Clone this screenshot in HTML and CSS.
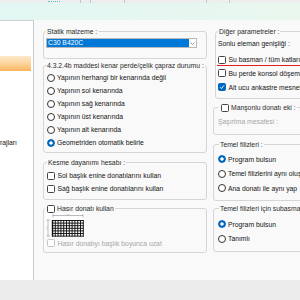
FILE: index.html
```html
<!DOCTYPE html>
<html lang="tr">
<head>
<meta charset="utf-8">
<title>Perde parametreleri</title>
<link rel="stylesheet" href="styles.css">
</head>
<body>
<div class="topstrip">
  <div class="cell w1"><span class="teal"></span></div>
  <div class="cell w2"></div>
  <div class="cell w3"></div>
  <div class="cell w4"></div>
  <div class="cell w5"></div>
  <div class="cell w6"></div>
</div>
<div class="band"></div>
<div class="main">
  <div class="tree">
    <div class="tree-sel"></div>
    <div class="tree-item">rajları</div>
  </div>

  <div class="col col-left">
    <fieldset class="grp g1">
      <legend>Statik malzeme :</legend>
      <div class="select">
        <span class="sel-val">C30 B420C</span>
        <span class="sel-arrow"><svg width="5" height="3" viewBox="0 0 5 3"><polyline points="0.5,0.5 2.5,2.5 4.5,0.5" fill="none" stroke="#666" stroke-width="0.7"/></svg></span>
      </div>
    </fieldset>

    <fieldset class="grp g2">
      <legend class="flush">4.3.2.4b maddesi kenar perde/çelik çapraz durumu :</legend>
      <div class="opt"><span class="radio"></span><span>Yapının herhangi bir kenarında değil</span></div>
      <div class="opt"><span class="radio"></span><span>Yapının sol kenarında</span></div>
      <div class="opt"><span class="radio"></span><span>Yapının sağ kenarında</span></div>
      <div class="opt"><span class="radio"></span><span>Yapının üst kenarında</span></div>
      <div class="opt"><span class="radio"></span><span>Yapının alt kenarında</span></div>
      <div class="opt"><span class="radio on"></span><span>Geometriden otomatik belirle</span></div>
    </fieldset>

    <fieldset class="grp g3">
      <legend>Kesme dayanımı hesabı :</legend>
      <div class="opt ck"><span class="chk"></span><span>Sol başlık enine donatılarını kullan</span></div>
      <div class="opt ck"><span class="chk"></span><span>Sağ başlık enine donatılarını kullan</span></div>
    </fieldset>

    <fieldset class="grp g4">
      <legend class="lg-cb"><span class="chk"></span><span>Hasır donatı kullan</span></legend>
      <svg class="mesh" width="40" height="24" viewBox="0 0 40 24">
        <rect x="0" y="0" width="40" height="24" fill="#fff"/>
        <g stroke="#777" stroke-width="0.5">
          <line x1="8" y1="2.5" x2="38" y2="2.5"/>
          <line x1="8" y1="1" x2="8" y2="4.5"/>
          <line x1="38" y1="1" x2="38" y2="4.5"/>
          <line x1="3" y1="7" x2="3" y2="23"/>
          <line x1="1.5" y1="7" x2="5" y2="7"/>
          <line x1="1.5" y1="23" x2="5" y2="23"/>
        </g>
        <text x="23" y="2" font-size="2.2" text-anchor="middle" fill="#999" font-family="Liberation Sans, sans-serif">200</text>
        <text x="2" y="15" font-size="2.2" text-anchor="middle" fill="#999" font-family="Liberation Sans, sans-serif" transform="rotate(-90 2 15)">150</text>
        <g stroke="#111" stroke-width="0.95">
          <line x1="7.5" y1="7" x2="7.5" y2="23.5" stroke-width="1.4"/>
          <line x1="10.3" y1="7" x2="10.3" y2="23.5"/>
          <line x1="13.1" y1="7" x2="13.1" y2="23.5"/>
          <line x1="15.9" y1="7" x2="15.9" y2="23.5"/>
          <line x1="18.7" y1="7" x2="18.7" y2="23.5"/>
          <line x1="21.5" y1="7" x2="21.5" y2="23.5"/>
          <line x1="24.3" y1="7" x2="24.3" y2="23.5"/>
          <line x1="27.1" y1="7" x2="27.1" y2="23.5"/>
          <line x1="29.9" y1="7" x2="29.9" y2="23.5"/>
          <line x1="32.7" y1="7" x2="32.7" y2="23.5"/>
          <line x1="35.5" y1="7" x2="35.5" y2="23.5"/>
          <line x1="38.3" y1="7" x2="38.3" y2="23.5"/>
          <line x1="7" y1="7.5" x2="38.8" y2="7.5"/>
          <line x1="7" y1="10.1" x2="38.8" y2="10.1"/>
          <line x1="7" y1="12.7" x2="38.8" y2="12.7"/>
          <line x1="7" y1="15.3" x2="38.8" y2="15.3"/>
          <line x1="7" y1="17.9" x2="38.8" y2="17.9"/>
          <line x1="7" y1="20.5" x2="38.8" y2="20.5"/>
          <line x1="7" y1="23.1" x2="38.8" y2="23.1"/>
        </g>
      </svg>
      <div class="opt ck dis"><span class="chk"></span><span>Hasır donatıyı başlık boyunca uzat</span></div>
    </fieldset>
  </div>

  <div class="col col-right">
    <fieldset class="grp dig">
      <legend>Diğer parametreler :</legend>
      <div class="txt">Sonlu eleman genişliği :</div>
      <div class="opt ck red"><span class="chk"></span><span>Su basman / tüm katlarda aynı olsun</span></div>
      <div class="opt ck r14"><span class="chk"></span><span>Bu perde konsol döşemeye mesnet</span></div>
      <div class="opt ck r14"><span class="chk on"><svg width="6" height="6" viewBox="0 0 6 6"><polyline points="1,3.2 2.4,4.6 5,1.4" fill="none" stroke="#fff" stroke-width="0.9"/></svg></span><span>Alt ucu ankastre mesnetli</span></div>
    </fieldset>

    <fieldset class="grp man">
      <legend class="lg-cb"><span class="chk"></span><span>Manşonlu donatı eki :</span></legend>
      <div class="txt dis">Şaşırtma mesafesi :</div>
    </fieldset>

    <fieldset class="grp tem">
      <legend>Temel filizleri :</legend>
      <div class="opt r145"><span class="radio on"></span><span>Program bulsun</span></div>
      <div class="opt r145"><span class="radio"></span><span>Temel filizlerini aynı oluştur</span></div>
      <div class="opt r145"><span class="radio"></span><span>Ana donatı ile aynı yap</span></div>
    </fieldset>

    <fieldset class="grp sub">
      <legend>Temel filizleri için subasman filizi :</legend>
      <div class="opt r145"><span class="radio on"></span><span>Program bulsun</span></div>
      <div class="opt r145"><span class="radio"></span><span>Tanımlı</span></div>
    </fieldset>
  </div>
</div>
<div class="footer"></div>
</body>
</html>
```

FILE: styles.css
```css
html, body {
  margin: 0;
  padding: 0;
}
body {
  width: 300px;
  height: 300px;
  overflow: hidden;
  background: #f9f9f9;
  font-family: "Liberation Sans", Arial, sans-serif;
  font-size: 6.8px;
  color: #141414;
}

.topstrip {
  height: 3px;
  display: flex;
  background: #eeeeee;
}
.cell {
  flex: none;
  box-sizing: border-box;
  border-right: 1px solid #c4c4c4;
  height: 3px;
}
.w1 { width: 81px; }
.w2 { width: 10px; }
.w3 { width: 34px; }
.w4 { width: 82px; }
.w5 { width: 23px; }
.w6 { width: 70px; border-right: none; }
.teal {
  display: block;
  margin-left: 48px;
  width: 12px;
  height: 1px;
  border-bottom: 1px dotted #5fc6c6;
}

.band {
  height: 17px;
  background: linear-gradient(90deg, #e2f6f3, #e9f7ee);
}

.main {
  display: flex;
  height: 260px;
}

.tree {
  flex: none;
  width: 34px;
  box-sizing: border-box;
  background: #fff;
  border-top: 1px solid #d0d0d0;
  border-right: 1px solid #c8c8c8;
  overflow: hidden;
}
.tree-sel {
  margin-top: 35px;
  height: 15px;
  margin-right: 2px;
  background: linear-gradient(#fde9cb, #fcd7a2 45%, #f7b55e);
}
.tree-item {
  margin-top: 67px;
  line-height: 9px;
  white-space: nowrap;
}

.col {
  flex: none;
  display: flex;
  flex-direction: column;
  padding-top: 7px;
}
.col-left {
  width: 164px;
  margin-left: 9px;
}
.col-right {
  width: 190px;
  margin-left: 6px;
}

.grp {
  margin: 0;
  padding: 0;
  min-width: 0;
  border: 1px solid #d6d6d6;
  border-radius: 3px;
}
.grp legend {
  padding: 0 1px;
  height: 9px;
  line-height: 9px;
  color: #2a2a2a;
  white-space: nowrap;
}
.grp legend.flush {
  margin-left: -1px;
}
.grp legend.lg-cb {
  display: flex;
  align-items: center;
  gap: 2px;
  padding: 0 1px 0 2px;
}

.opt {
  display: flex;
  align-items: center;
  gap: 2px;
  height: 13px;
  white-space: nowrap;
}
.opt.ck { gap: 2.5px; }

.radio {
  flex: none;
  width: 8px;
  height: 8px;
  box-sizing: border-box;
  border: 1px solid #333;
  border-radius: 50%;
  background: #fff;
}
.radio.on {
  border-color: #0067c0;
  background: radial-gradient(circle, #fff 0 1.4px, #0067c0 1.9px);
}

.chk {
  flex: none;
  width: 8px;
  height: 8px;
  box-sizing: border-box;
  border: 1px solid #444;
  border-radius: 1.5px;
  background: #fff;
  display: flex;
  align-items: center;
  justify-content: center;
}
.chk.on {
  background: #0067c0;
  border-color: #0067c0;
}

.dis { color: #a6a6a6; }
.dis .chk { border-color: #c6c6c6; }

/* Left column groups */
.g1 { padding: 2px 9px 10px 2px; }
.select {
  height: 10px;
  box-sizing: border-box;
  border: 1px solid #b9b9b9;
  background: #fff;
  display: flex;
}
.sel-val {
  flex: 1;
  background: #0078d7;
  color: #fff;
  line-height: 8px;
  padding-left: 1px;
}
.sel-arrow {
  width: 7px;
  display: flex;
  align-items: center;
  justify-content: center;
}

.g2 {
  margin-top: 2px;
  padding: 1px 0 3px 3px;
}
.g3 {
  margin-top: 5px;
  padding: 2px 0 4px 3px;
}
.g4 {
  margin-top: 4px;
  padding: 0 0 3px 1px;
}
.mesh { display: block; }
.g4 .opt {
  height: 12px;
  padding-left: 2px;
}

/* Right column groups */
.dig {
  margin-left: 2px;
  padding: 2px 0 4px 2px;
}
.txt {
  height: 12px;
  line-height: 12px;
  white-space: nowrap;
}
.red {
  margin-top: 4px;
  height: 11px;
  margin-left: -1px;
  padding-left: 1px;
  border-bottom: 1px solid #e0201c;
}
.r14 { height: 14px; }

.man {
  margin-top: 4px;
  padding: 4px 0 6px 4px;
}
.man legend.lg-cb { padding-left: 3px; }

.tem {
  margin-top: 5px;
  padding: 3px 0 4.5px 4px;
}
.tem legend, .sub legend { margin-left: 1px; }
.r145 { height: 14.5px; }

.sub {
  margin-top: 3px;
  padding: 4px 0 5px 4px;
}

.footer {
  height: 20px;
  background: #ececec;
}
```
